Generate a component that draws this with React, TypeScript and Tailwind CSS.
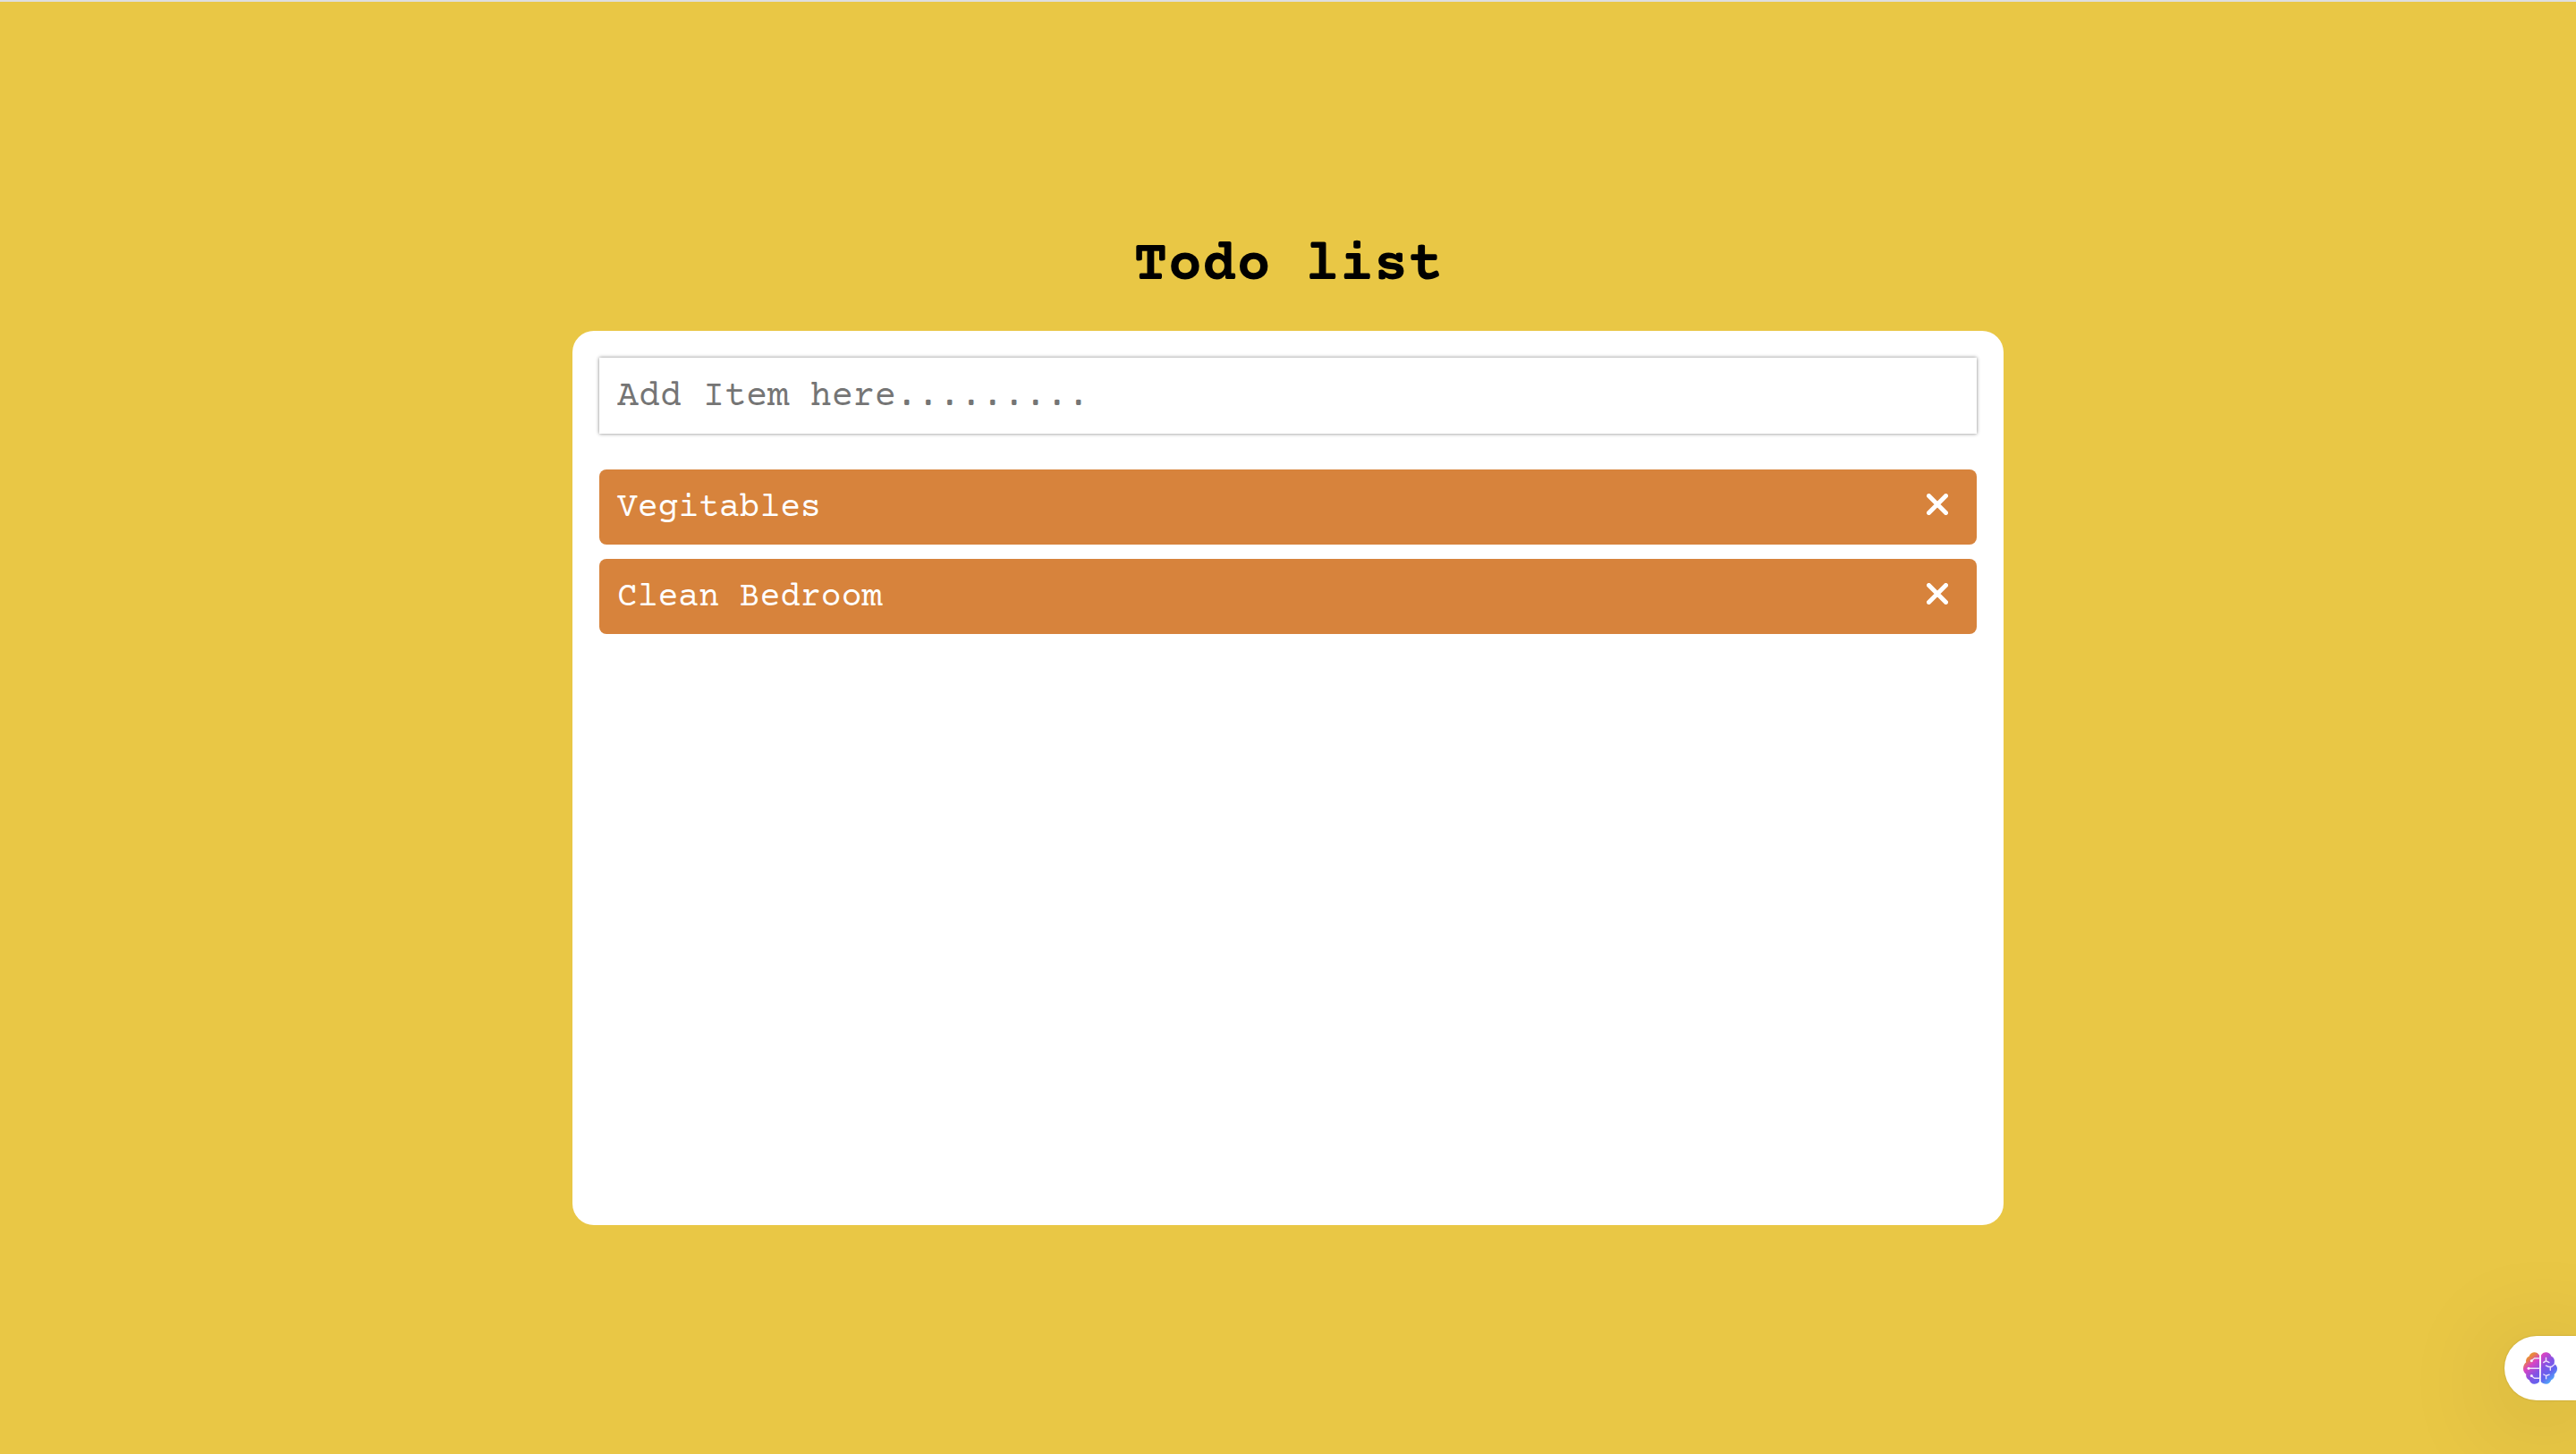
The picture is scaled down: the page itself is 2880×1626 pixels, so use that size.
import { useState } from 'react';

function CloseIcon() {
  return (
    <svg viewBox="0 0 24 24" className="size-6" fill="none" stroke="currentColor" strokeWidth="5" strokeLinecap="round" aria-hidden="true">
      <path d="M2.5 2.5 21.5 21.5M21.5 2.5 2.5 21.5" />
    </svg>
  );
}

function BrainIcon() {
  return (
    <svg viewBox="0 0 38 36" className="h-9 w-[38px]" aria-hidden="true">
      <defs>
        <linearGradient id="brain" x1="4" y1="2" x2="32" y2="34" gradientUnits="userSpaceOnUse">
          <stop offset="0" stopColor="#eda83a" />
          <stop offset="0.13" stopColor="#e8843f" />
          <stop offset="0.29" stopColor="#d944c4" />
          <stop offset="0.55" stopColor="#8452e4" />
          <stop offset="0.78" stopColor="#6065f0" />
          <stop offset="1" stopColor="#4fb4fa" />
        </linearGradient>
      </defs>
      <g fill="url(#brain)">
        <path d="M18 3.5C16.8 1.2 14.4 0 12 .2 9.200.4 7.300 2.200 6.600 4.700 3.900 5.800 2.500 8.600 3.200 11.600 1.200 13.200 0 15.800 0 18.500c0 2.600 1.200 4.900 3.200 6.300-.5 3 1 5.500 3.500 6.500.9 2.700 3 4.400 5.700 4.500 2.300 0 4.400-.8 5.600-2.700Z" />
        <path d="M20 3.500C21.200 1.200 23.500 0 26 .2c2.800.2 4.700 2 5.400 4.500 2.700 1.100 4.100 3.900 3.400 6.900l-.3 2.200 1.700.4c1.100 1.200 1.800 2.700 1.800 4.300 0 2.600-1.200 4.900-3.200 6.300.5 3-1 5.500-3.500 6.500-.9 2.700-3 4.400-5.700 4.500-2.300 0-4.700-.8-5.900-2.700Z" />
      </g>
      <g fill="none" stroke="#ecdffc" strokeWidth="1.400" strokeLinecap="round" strokeLinejoin="round">
        <path d="M18 7h-5.500L9.500 9.500M18 18.200H6.500M18 29.200h-5.500l-3.300-2.400" />
        <path d="M25.500 6.500v3.300l-2.800 1.800M25.500 9.800l3.500 1.800M25.400 15.200l3 1.300h3.300l3-2.500M30.300 16.800v3.500M22.800 25l2.800 1.500 3.600-1.300M25.600 26.500v3.200" />
      </g>
      <g fill="#f7eefe">
        <circle cx="9.300" cy="9.800" r="1.500" />
        <circle cx="6" cy="18.200" r="1.500" />
        <circle cx="9.300" cy="26.500" r="1.500" />
      </g>
    </svg>
  );
}

export default function App() {
  const [items, setItems] = useState(['Vegitables', 'Clean Bedroom']);
  const [draft, setDraft] = useState('');

  return (
    <div className="min-h-screen border-t-2 border-[#dedede] bg-[#e9c745] font-['Courier_Prime','Liberation_Mono',monospace]">
      <main className="mx-auto w-5/9 pt-65">
        <h1 className="text-center text-[64px] leading-[72px] font-bold text-black">Todo list</h1>
        <section className="mt-9 min-h-[1000px] rounded-3xl bg-white p-[30px]">
          <form
            onSubmit={(e) => {
              e.preventDefault();
              if (draft.trim()) setItems([...items, draft.trim()]);
              setDraft('');
            }}
          >
            <input
              type="text"
              aria-label="Add item"
              placeholder="Add Item here........."
              value={draft}
              onChange={(e) => setDraft(e.target.value)}
              className="block h-[85px] w-full bg-white px-5 pt-1 text-[40px] text-black shadow-[0_0_4px_#808080] outline-none placeholder:text-[#757575]"
            />
          </form>
          <ul className="mt-10 flex flex-col gap-4">
            {items.map((item, index) => (
              <li key={index} className="flex h-[84px] items-center justify-between rounded-lg bg-[#d7833c] pt-0.5 pr-8 pl-5 text-[38px] text-white">
                <span>{item}</span>
                <button
                  type="button"
                  aria-label={`Remove ${item}`}
                  className="mb-2"
                  onClick={() => setItems(items.filter((_, i) => i !== index))}
                >
                  <CloseIcon />
                </button>
              </li>
            ))}
          </ul>
        </section>
      </main>
      <button
        type="button"
        aria-label="Open assistant"
        className="fixed right-0 bottom-15 flex h-18 w-20 items-center rounded-l-full bg-white pl-[21px] shadow-[0_16px_120px_rgba(0,0,0,0.2),0_0_3px_rgba(0,0,0,0.15)]"
      >
        <BrainIcon />
      </button>
    </div>
  );
}
